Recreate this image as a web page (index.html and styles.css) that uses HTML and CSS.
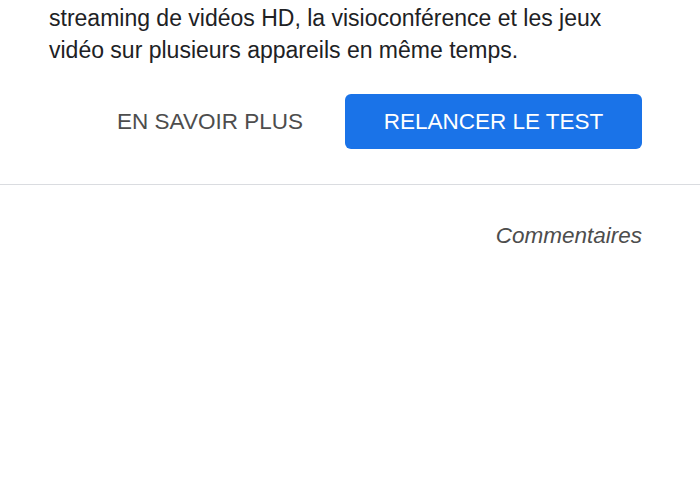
FILE: index.html
```html
<!DOCTYPE html>
<html lang="fr">
<head>
  <meta charset="UTF-8" />
  <meta name="viewport" content="width=device-width, initial-scale=1.0" />
  <title>Test de vitesse</title>
  <link rel="stylesheet" href="styles.css">
</head>
<body>

  <div class="result">
    <p class="desc">streaming de vidéos HD, la visioconférence et les jeux<br>
      vidéo sur plusieurs appareils en même temps.</p>

    <div class="actions">
      <a class="link" href="#">EN SAVOIR PLUS</a>
      <button class="retry" type="button">RELANCER LE TEST</button>
    </div>
  </div>

  <div class="footer">
    <a class="feedback" href="#">Commentaires</a>
  </div>

</body>
</html>
```

FILE: styles.css
```css
* { box-sizing: border-box; }
body {
  font-family: 'Liberation Sans', Arial, sans-serif;
  background-color: #fff;
  margin: 0;
  padding: 0;
  color: #202124;
}
.result {
  padding: 2px 58px 35px 49px;
  border-bottom: 1px solid #dadce0;
}
.desc {
  margin: 0;
  font-size: 23px;
  line-height: 32px;
}
.actions {
  display: flex;
  justify-content: flex-end;
  align-items: center;
  gap: 42px;
  margin-top: 28px;
}
.link {
  color: #4d4d4d;
  font-size: 22.5px;
  text-decoration: none;
}
.retry {
  width: 297px;
  height: 55px;
  border: none;
  border-radius: 6px;
  background-color: #1a73e8;
  color: #fff;
  font-family: inherit;
  font-size: 22.5px;
  cursor: pointer;
}
.footer {
  display: flex;
  justify-content: flex-end;
  padding: 38px 58px 0 0;
}
.feedback {
  color: #4d4d4d;
  font-size: 22.5px;
  font-style: italic;
  text-decoration: none;
}
```
